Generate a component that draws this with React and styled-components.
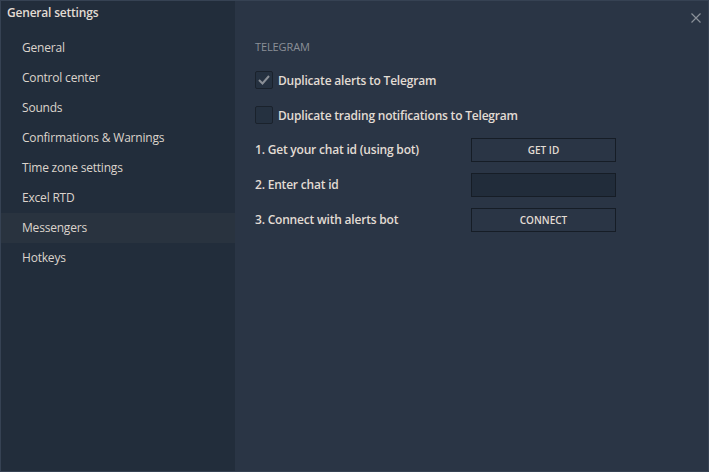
import styled, { createGlobalStyle } from 'styled-components';

const Global = createGlobalStyle`
  html, body { margin: 0; padding: 0; background: #2a3545; }
  body { font-family: "Open Sans", "Noto Sans", sans-serif; }
`;

const Window = styled.div`
  width: 709px;
  height: 472px;
  box-sizing: border-box;
  display: grid;
  grid-template-columns: 234px 1fr;
  background: #2a3545;
  border: 1px solid #364253;
  position: relative;
`;

const Sidebar = styled.div`
  background: #222d3b;
  display: flex;
  flex-direction: column;
`;

const Title = styled.div`
  height: 24px;
  padding: 3px 0 0 6px;
  box-sizing: border-box;
  font-size: 12px;
  font-weight: 600;
  color: #e2dcd4;
  letter-spacing: -0.2px;
`;

const Nav = styled.div`
  display: flex;
  flex-direction: column;
  padding-top: 8px;
`;

const NavItem = styled.div`
  height: 30px;
  line-height: 30px;
  padding-left: 21px;
  font-size: 12px;
  color: #dcd4cc;
  letter-spacing: -0.2px;
  background: ${p => (p.$active ? '#29333f' : 'transparent')};
`;

const Main = styled.div`
  padding: 38px 0 0 20px;
  display: flex;
  flex-direction: column;
`;

const Section = styled.div`
  font-size: 11px;
  color: #8b9097;
  letter-spacing: -0.1px;
  margin-bottom: 17px;
`;

const Checks = styled.div`
  display: flex;
  flex-direction: column;
  gap: 17px;
`;

const CheckRow = styled.label`
  display: flex;
  align-items: center;
  gap: 5px;
  height: 18px;
  font-size: 12px;
  font-weight: 600;
  color: #e2dcd4;
  letter-spacing: -0.2px;
`;

const Box = styled.span`
  width: 18px;
  height: 18px;
  box-sizing: border-box;
  border: 1px solid #1a222c;
  border-radius: 2px;
  background: #253140;
  display: flex;
  align-items: center;
  justify-content: center;
`;

const Steps = styled.div`
  display: flex;
  flex-direction: column;
  gap: 11px;
  margin-top: 14px;
`;

const StepRow = styled.div`
  display: grid;
  grid-template-columns: 216px 145px;
  align-items: center;
  height: 24px;
`;

const StepLabel = styled.span`
  font-size: 12px;
  font-weight: 600;
  color: #e2dcd4;
  letter-spacing: -0.2px;
  margin-top: -2px;
`;

const Button = styled.button`
  height: 24px;
  box-sizing: border-box;
  border: 1px solid #161d26;
  background: #2a3545;
  color: #e2dcd4;
  font-family: inherit;
  font-size: 10px;
  font-weight: 600;
  padding: 0;
`;

const Input = styled.input`
  height: 24px;
  box-sizing: border-box;
  border: 1px solid #161d26;
  background: #212c3a;
  outline: none;
  color: #e2dcd4;
`;

const Close = styled.div`
  position: absolute;
  right: 6px;
  top: 6px;
  width: 12px;
  height: 12px;
`;

const items = [
  'General',
  'Control center',
  'Sounds',
  'Confirmations & Warnings',
  'Time zone settings',
  'Excel RTD',
  'Messengers',
  'Hotkeys',
];

export default function App() {
  return (
    <>
      <Global />
      <Window>
        <Sidebar>
          <Title>General settings</Title>
          <Nav>
            {items.map(x => (
              <NavItem key={x} $active={x === 'Messengers'}>
                {x}
              </NavItem>
            ))}
          </Nav>
        </Sidebar>
        <Main>
          <Section>TELEGRAM</Section>
          <Checks>
            <CheckRow>
              <Box>
                <svg width="12" height="10" viewBox="0 0 12 10">
                  <path d="M1 5 L4.5 8.5 L11 1" fill="none" stroke="#8a8f96" strokeWidth="2" />
                </svg>
              </Box>
              Duplicate alerts to Telegram
            </CheckRow>
            <CheckRow>
              <Box />
              Duplicate trading notifications to Telegram
            </CheckRow>
          </Checks>
          <Steps>
            <StepRow>
              <StepLabel>1. Get your chat id (using bot)</StepLabel>
              <Button>GET ID</Button>
            </StepRow>
            <StepRow>
              <StepLabel>2. Enter chat id</StepLabel>
              <Input />
            </StepRow>
            <StepRow>
              <StepLabel>3. Connect with alerts bot</StepLabel>
              <Button>CONNECT</Button>
            </StepRow>
          </Steps>
        </Main>
        <Close>
          <svg width="12" height="12" viewBox="0 0 12 12">
            <path d="M1.5 1.5 L10.5 10.5 M10.5 1.5 L1.5 10.5" stroke="#8a9099" strokeWidth="1.2" />
          </svg>
        </Close>
      </Window>
    </>
  );
}
